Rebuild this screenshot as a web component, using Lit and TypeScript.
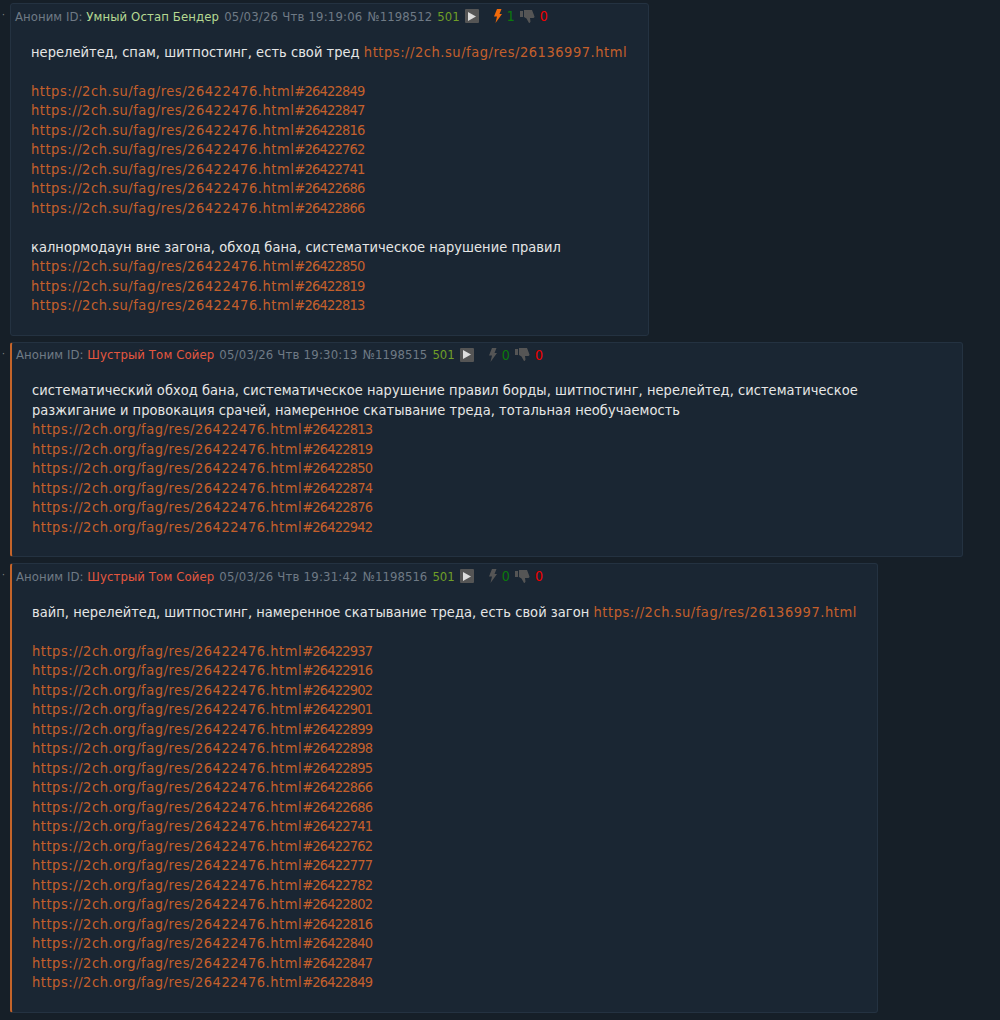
import { LitElement, html, css } from "lit";
import { customElement } from "lit/decorators.js";

const L = (host: string, ids: string[]) => ids.map((i) => html`<a class="url">https://${host}/fag/res/26422476.html</a><a class="hash">#${i}</a>\n`);

@customElement("app-root")
export class AppRoot extends LitElement {
  static styles = css`
    :host { display: block; background: #161f28; font-family: "DejaVu Sans", sans-serif; font-stretch: condensed; font-size: 14.5px; color: #e6e6e6; overflow: hidden; height: 1020px; padding-top: 3px; box-sizing: border-box; }
    .row { display: flex; margin-bottom: 6px; }
    .dot { width: 10px; flex: none; color: #888; font-size: 10px; line-height: 24px; padding-left: 2px; box-sizing: border-box; }
    .post { box-sizing: border-box; background: #1a2633; border: 1px solid #243241; border-radius: 3px; }
    .post.mark { border-left: 2px solid #c4642a; }
    .head { height: 24px; margin-bottom: 2px; display: flex; align-items: center; padding-left: 4px; gap: 5px; font-size: 13px; letter-spacing: 0.05px; color: #6f7a85; white-space: nowrap; }
    .name { letter-spacing: 0.12px; }
    .date { letter-spacing: 0.2px; }
    .green { color: #b5d992; }
    .red { color: #e5573f; }
    .ok { color: #6f9e27; }
    .play { width: 14px; height: 14px; background: #555; border-radius: 1px; display: flex; align-items: center; justify-content: center; }
    .g { color: #0b7a0b; font-size: 14px; } .rr { color: #f00000; font-size: 14px; }
    .gap { width: 4px; }
    svg { display: block; }
    .body { padding: 12.5px 20px 19px; line-height: 19.5px; white-space: pre-line; letter-spacing: 0.04px; }
    a { color: #c5602c; text-decoration: none; }
    a.url { letter-spacing: 0.54px; }
    a.hash { letter-spacing: -0.8px; }
  `;

  posts = [
    { mark: false, name: "Умный Остап Бендер", cls: "green", date: "05/03/26 Чтв 19:19:06", num: "№1198512", fire: true, v: "1", w: 639 },
    { mark: true, name: "Шустрый Том Сойер", cls: "red", date: "05/03/26 Чтв 19:30:13", num: "№1198515", fire: false, v: "0", w: 953 },
    { mark: true, name: "Шустрый Том Сойер", cls: "red", date: "05/03/26 Чтв 19:31:42", num: "№1198516", fire: false, v: "0", w: 868 },
  ];

  content = [
    html`нерелейтед, спам, шитпостинг, есть свой тред <a class="url">https://2ch.su/fag/res/26136997.html</a>

${L("2ch.su", ["26422849","26422847","26422816","26422762","26422741","26422686","26422866"])}
калнормодаун вне загона, обход бана, систематическое нарушение правил
${L("2ch.su", ["26422850","26422819","26422813"])}`,
    html`систематический обход бана, систематическое нарушение правил борды, шитпостинг, нерелейтед, систематическое
разжигание и провокация срачей, намеренное скатывание треда, тотальная необучаемость
${L("2ch.org", ["26422813","26422819","26422850","26422874","26422876","26422942"])}`,
    html`вайп, нерелейтед, шитпостинг, намеренное скатывание треда, есть свой загон <a class="url">https://2ch.su/fag/res/26136997.html</a>

${L("2ch.org", ["26422937","26422916","26422902","26422901","26422899","26422898","26422895","26422866","26422686","26422741","26422762","26422777","26422782","26422802","26422816","26422840","26422847","26422849"])}`,
  ];

  render() {
    return this.posts.map((p, i) => html`
      <div class="row">
        <div class="dot">·</div>
        <div class="post ${p.mark ? "mark" : ""}" style="width:${p.w}px">
          <div class="head">
            <span>Аноним ID: <span class="name ${p.cls}">${p.name}</span></span>
            <span class="date">${p.date}</span><span>${p.num}</span><span class="ok">501</span>
            <span class="play"><svg width="8" height="9" viewBox="0 0 8 9"><path d="M0 0l8 4.500L0 9z" fill="#ddd"/></svg></span>
            <span class="gap"></span>
            <svg width="9" height="14" viewBox="0 0 9 14"><path d="M4 0h4.500L6.500 5H9L2.500 14 4 7.500H1z" fill=${p.fire ? "#f26a0a" : "#555"}/></svg>
            <span class="g">${p.v}</span>
            <svg width="15" height="13" viewBox="0 0 15 13"><path d="M0 1h3v6H0zM4 0h8l2.500 6.500q0 1.500-1.500 1.500H10l.5 3.500Q10 13 9 13L6.500 8.500 4 7z" fill="#555"/></svg>
            <span class="rr">0</span>
          </div>
          <div class="body">${this.content[i]}</div>
        </div>
      </div>`);
  }
}
